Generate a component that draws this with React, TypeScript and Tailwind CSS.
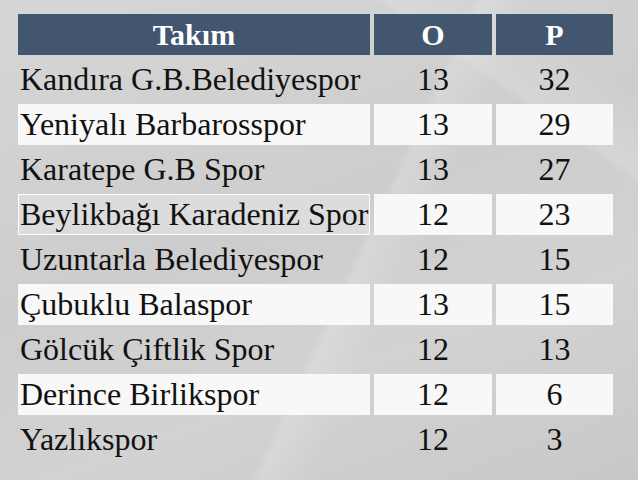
const rows: [string, number, number][] = [
  ["Kandıra G.B.Belediyespor", 13, 32],
  ["Yeniyalı Barbarosspor", 13, 29],
  ["Karatepe G.B Spor", 13, 27],
  ["Beylikbağı Karadeniz Spor", 12, 23],
  ["Uzuntarla Belediyespor", 12, 15],
  ["Çubuklu Balaspor", 13, 15],
  ["Gölcük Çiftlik Spor", 12, 13],
  ["Derince Birlikspor", 12, 6],
  ["Yazlıkspor", 12, 3],
];

export default function App() {
  return (
    <div className="relative h-[480px] w-[638px] overflow-hidden bg-[linear-gradient(160deg,#d6d6d6_0%,#cdcdcd_45%,#d2d2d2_70%,#c8c8c8_100%)] [font-family:'Liberation_Serif','Times_New_Roman',serif]">
      {/* faint diagonal streaks of the backdrop */}
      <div className="pointer-events-none absolute inset-0 bg-[linear-gradient(115deg,transparent_0%,transparent_55%,rgba(255,255,255,0.18)_56%,transparent_62%,transparent_100%)]" />
      <div className="pointer-events-none absolute inset-0 bg-[linear-gradient(35deg,transparent_0%,transparent_80%,rgba(255,255,255,0.15)_81%,transparent_90%)]" />

      <table className="relative ml-[14px] mt-[10px] w-[603px] table-fixed border-separate border-spacing-1 text-[32px] leading-none text-[#111] [font-family:'Liberation_Serif','Times_New_Roman',serif]">
        <thead>
          <tr>
            <th className="h-[41px] w-[352px] bg-[#43566f] p-0 text-center text-[30px] font-bold text-white">Takım</th>
            <th className="h-[41px] w-[118px] bg-[#43566f] p-0 text-center text-[30px] font-bold text-white">O</th>
            <th className="h-[41px] w-[117px] bg-[#43566f] p-0 text-center text-[30px] font-bold text-white">P</th>
          </tr>
        </thead>
        <tbody>
          {rows.map(([team, o, p], i) => {
            const striped = i % 2 === 1;
            const cell = striped ? "bg-[#f8f8f8]" : "";
            const hovered = i === 3;
            return (
              <tr key={team}>
                <td
                  className={
                    hovered
                      ? "h-[41px] border border-white bg-[#dcdcdc] pt-0 pb-[1px] pl-[1px] pr-0 whitespace-nowrap"
                      : `h-[41px] ${cell} pt-0 pb-[2px] pl-[2px] pr-0 whitespace-nowrap`
                  }
                >
                  {team}
                </td>
                <td className={`h-[41px] ${cell} px-0 pt-0 pb-[2px] text-center`}>{o}</td>
                <td className={`h-[41px] ${cell} px-0 pt-0 pb-[2px] text-center`}>{p}</td>
              </tr>
            );
          })}
        </tbody>
      </table>
    </div>
  );
}
